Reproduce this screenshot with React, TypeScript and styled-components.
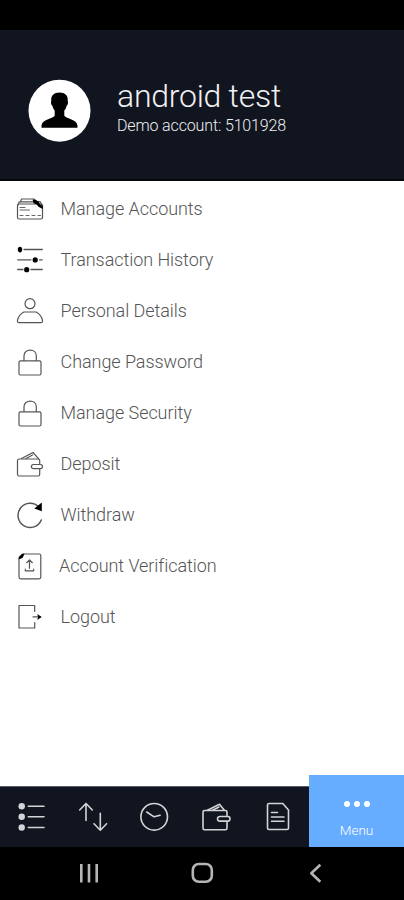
import React from "react";
import styled, { createGlobalStyle } from "styled-components";

const GlobalStyle = createGlobalStyle`
  * { box-sizing: border-box; }
  body { margin: 0; background: #000; font-family: Roboto, "Liberation Sans", sans-serif; }
`;

const Screen = styled.div`
  width: 404px;
  height: 900px;
  display: flex;
  flex-direction: column;
  background: #fff;
  overflow: hidden;
`;

const StatusBar = styled.div`
  height: 30px;
  flex: none;
  background: #000;
`;

const Header = styled.header`
  height: 151px;
  flex: none;
  display: flex;
  align-items: flex-start;
  padding: 49px 0 0 28px;
  background: #11151f;
  border-bottom: 2px solid #05070c;
`;

const Avatar = styled.svg`
  width: 63px;
  height: 63px;
  flex: none;
`;

const Identity = styled.div`
  margin: -2px 0 0 26px;
  white-space: nowrap;
`;

const UserName = styled.h1`
  margin: 0;
  font-size: 32px;
  line-height: 38px;
  font-weight: 300;
  letter-spacing: -0.26px;
  color: #f1f1f2;
`;

const AccountLine = styled.div`
  margin-top: 1px;
  font-size: 16px;
  line-height: 20px;
  font-weight: 300;
  letter-spacing: -0.14px;
  color: #f0f0f2;
`;

const MenuList = styled.nav`
  flex: 1;
  display: flex;
  flex-direction: column;
  padding-top: 2px;
`;

const MenuRow = styled.a<{ $gap: number }>`
  height: 51px;
  display: flex;
  align-items: center;
  padding-left: 15px;
  gap: ${(p) => p.$gap}px;
  font-size: 18px;
  line-height: 22px;
  font-weight: 300;
  letter-spacing: -0.06px;
  color: #555;
  white-space: nowrap;
`;

const LineIcon = styled.svg<{ $color: string; $weight: number }>`
  width: 30px;
  height: 30px;
  flex: none;
  fill: none;
  stroke: ${(p) => p.$color};
  stroke-width: ${(p) => p.$weight};
  stroke-linecap: round;
  stroke-linejoin: round;
  .solid { fill: ${(p) => p.$color}; stroke: none; }
  .ink { fill: #000; stroke: none; }
`;

const TabBar = styled.nav`
  height: 72px;
  flex: none;
  display: flex;
  align-items: flex-end;
`;

const Tabs = styled.div`
  width: 309px;
  height: 61px;
  display: grid;
  grid-template-columns: repeat(5, 1fr);
  place-items: center;
  background: #11151f;
  border-top: 1px solid #5b5e66;
`;

const ActiveTab = styled.div`
  flex: 1;
  height: 72px;
  display: flex;
  flex-direction: column;
  align-items: center;
  padding-top: 26px;
  background: #66acff;
  font-size: 13.5px;
  line-height: 18px;
  font-weight: 300;
  color: #fff;
`;

const Dots = styled.div`
  display: flex;
  gap: 4px;
  margin-bottom: 14px;
`;

const Dot = styled.span`
  width: 6px;
  height: 6px;
  border-radius: 50%;
  background: #fff;
`;

const SystemBar = styled.div`
  height: 53px;
  flex: none;
  display: flex;
  justify-content: center;
  gap: 83px;
  padding-top: 11px;
  background: #000;
`;

const icons: Record<string, React.ReactNode> = {
  accounts: (
    <>
      <rect x="2.5" y="10" width="25" height="15" rx="1.5" />
      <path d="M3 11 4.3 7.8H19M5.5 7.5 6.5 5H19L21 7M21 7.5h4L27 11" />
      <path className="ink" d="M17.5 5.5 21 6l3 2 .8 2 3 2v3l-4-2-2.2-2.6-3-1.2Z" />
      <path d="M5 13.5h5M5 16h9.5" strokeWidth=".9" />
      <path d="M5 21.5h3M11 21.5h3M17 21.5h3M23 21.5h2.5" strokeWidth=".9" />
    </>
  ),
  sliders: (
    <>
      <path d="M9 4.5h18.3M2.7 14.8H16M24.5 14.8h2.8M2.7 24.500H8M16 24.500h11.3" strokeWidth="1.3" />
      <ellipse className="ink" cx="5" cy="4.600" rx="2.2" ry="2.800" />
      <circle className="ink" cx="20.2" cy="14.900" r="2.6" />
      <circle className="ink" cx="11.7" cy="24.700" r="2.6" />
    </>
  ),
  person: (
    <>
      <circle cx="15" cy="7.7" r="5" />
      <path d="M8.8 16h12.4c3.3 1.8 5.5 4.5 6.3 8.4q.3 2.3-1.6 2.3H4.1q-1.9 0-1.6-2.3C3.3 20.5 5.5 17.8 8.8 16Z" />
    </>
  ),
  lock: (
    <>
      <rect x="4" y="13.8" width="22" height="14.2" rx="1.5" />
      <path d="M9 13.5V8.8c0-7.6 12.3-7.6 12.3 0v4.7" />
    </>
  ),
  wallet: (
    <>
      <path d="M24.7 15V11.5Q24.7 10 23.2 10H4Q2.5 10 2.5 11.5V25.2Q2.5 27 4 27H23.2Q24.7 27 24.7 25.5V20" />
      <path d="M6.5 9.5 18 3.5 23.5 9.7M11 9.5 17.5 6" />
      <path d="M25.5 15.5H18.5a2.1 2.1 0 0 0 0 4.2h7q2 0 2-2.1t-2-2.1Z" />
    </>
  ),
  refresh: (
    <>
      <path d="M26.3 20A12.1 12.1 0 1 1 23.8 7" strokeWidth="1.5" />
      <path className="ink" d="M19.3 8.6 26.8 2.6v8.6Z" />
    </>
  ),
  upload: (
    <>
      <path d="M4 8 8.5 3H24q1.8 0 1.8 1.8V26q0 1.8-1.8 1.8H5.7Q4 27.8 4 26Z" />
      <path className="ink" d="M3.7 8.3V6L7 2.7h2.5L7.5 7Z" />
      <path d="M14.5 17.3V9M11.7 11.7 14.5 9l2.8 2.7M10.3 18.2v1.6h8.4v-1.6" />
    </>
  ),
  logout: (
    <>
      <path d="M19.7 9.5V3.5H4V26H19.7V20.5" />
      <path d="M18 14.9h7" />
      <path className="ink" d="m22.3 11.9 4.4 3-4.4 3 .8-3Z" />
    </>
  ),
  list: (
    <>
      <path d="M12.3 4.2H28M12.3 14.8H28M12.3 25.5H28" />
      <circle className="solid" cx="5.7" cy="4.2" r="3.2" />
      <circle className="solid" cx="5.7" cy="14.8" r="3.2" />
      <circle className="solid" cx="5.7" cy="25.5" r="3.2" />
    </>
  ),
  arrows: (
    <>
      <path d="M8 18.5V1.5M1.7 8 8 1.5 14.3 8" />
      <path d="M22.3 11.3V28.2M16 21.7l6.3 6.5 6.3-6.5" />
    </>
  ),
  clock: (
    <>
      <circle cx="15.2" cy="14.8" r="13.3" />
      <path d="m7.700 10 7.400 4.800 6-1.500" />
    </>
  ),
  walletBar: (
    <>
      <path d="M26 14V10Q26 8.5 24.5 8.5H3.5Q2 8.5 2 10V26Q2 27.700 3.5 27.700H24.5Q26 27.700 26 26V19.700" />
      <path d="M6.5 8.2 18.5 2.3 23.3 8.2M11.5 8.2 18 5" />
      <path d="M27 14.5H18.8a2.3 2.3 0 0 0 0 4.6H27q2 0 2-2.3t-2-2.3Z" />
    </>
  ),
  document: (
    <>
      <path d="M6 1.5H19.8L25.500 8V26Q25.500 27.500 24 27.500H6Q4.500 27.500 4.500 26V3Q4.500 1.500 6 1.500Z" />
      <path d="M8.500 10.500h6M8.500 15h12.500M8.500 19.300h12.500" />
    </>
  ),
  recents: <path d="M7.3 6v18.5M15 6v18.500M22.700 6v18.500" strokeLinecap="butt" />,
  home: <rect x="5.800" y="6" width="19" height="17.800" rx="6" />,
  back: <path d="M20.300 6.800 11.300 15.200l9 8.600" strokeLinecap="butt" />,
};

const entries = [
  { icon: "accounts", label: "Manage Accounts", gap: 15.5 },
  { icon: "sliders", label: "Transaction History", gap: 15.5 },
  { icon: "person", label: "Personal Details", gap: 15.5 },
  { icon: "lock", label: "Change Password", gap: 15.5 },
  { icon: "lock", label: "Manage Security", gap: 15.5 },
  { icon: "wallet", label: "Deposit", gap: 15.5 },
  { icon: "refresh", label: "Withdraw", gap: 15.5 },
  { icon: "upload", label: "Account Verification", gap: 14 },
  { icon: "logout", label: "Logout", gap: 15.5 },
];

const tabs = ["list", "arrows", "clock", "walletBar", "document"];
const systemKeys = ["recents", "home", "back"];

export default function App() {
  return (
    <>
      <GlobalStyle />
      <Screen>
        <StatusBar />
        <Header>
          <Avatar viewBox="0 0 63 63">
            <circle cx="31.5" cy="31.7" r="31" fill="#fff" />
            <path d="M31.5 13.5c-5.5 0-8.7 3-8.2 8.2-.8 1.8-.2 4 1.2 5.2.5 2.2 1.3 3.700 2.200 4.600v5.300c-2 3.300-12.700 3.400-13.200 10v2h36v-2c-.5-6.600-11.200-6.700-13.200-10v-5.300c1-1 1.700-2.400 2.200-4.600 1.400-1.200 2-3.400 1.200-5.200.5-5.200-2.700-8.200-8.200-8.200Z" />
          </Avatar>
          <Identity>
            <UserName>android test</UserName>
            <AccountLine>Demo account: 5101928</AccountLine>
          </Identity>
        </Header>
        <MenuList>
          {entries.map((e) => (
            <MenuRow key={e.label} $gap={e.gap}>
              <LineIcon viewBox="0 0 30 30" $color="#555" $weight={1.2}>{icons[e.icon]}</LineIcon>
              <span>{e.label}</span>
            </MenuRow>
          ))}
        </MenuList>
        <TabBar>
          <Tabs>
            {tabs.map((t) => (
              <LineIcon key={t} viewBox="0 0 30 30" $color="#d3d4d6" $weight={1.6}>{icons[t]}</LineIcon>
            ))}
          </Tabs>
          <ActiveTab>
            <Dots><Dot /><Dot /><Dot /></Dots>
            Menu
          </ActiveTab>
        </TabBar>
        <SystemBar>
          {systemKeys.map((k) => (
            <LineIcon key={k} viewBox="0 0 30 30" $color="#b5b5b5" $weight={2.6}>{icons[k]}</LineIcon>
          ))}
        </SystemBar>
      </Screen>
    </>
  );
}
